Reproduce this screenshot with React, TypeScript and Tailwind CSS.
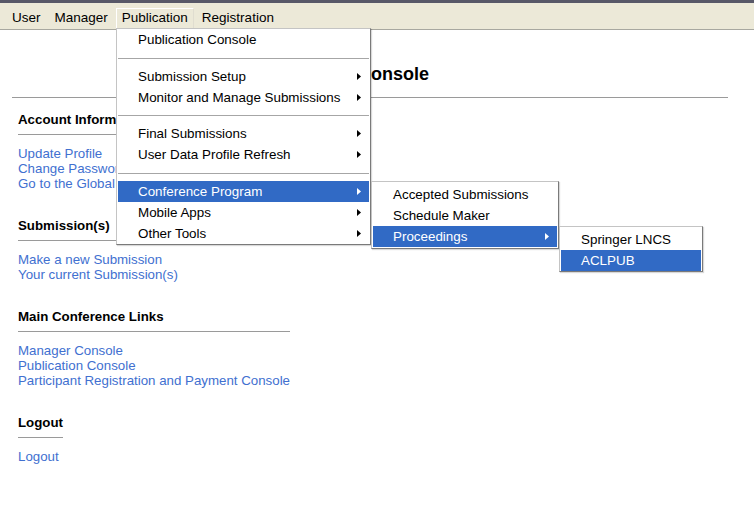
import React from "react";

type Item = { label: string; sub?: boolean; active?: boolean } | "sep";

const mainMenu: Item[] = [
  { label: "Publication Console" },
  "sep",
  { label: "Submission Setup", sub: true },
  { label: "Monitor and Manage Submissions", sub: true },
  "sep",
  { label: "Final Submissions", sub: true },
  { label: "User Data Profile Refresh", sub: true },
  "sep",
  { label: "Conference Program", sub: true, active: true },
  { label: "Mobile Apps", sub: true },
  { label: "Other Tools", sub: true },
];

const programMenu: Item[] = [
  { label: "Accepted Submissions" },
  { label: "Schedule Maker" },
  { label: "Proceedings", sub: true, active: true },
];

const procMenu: Item[] = [
  { label: "Springer LNCS" },
  { label: "ACLPUB", active: true },
];

const sections = [
  {
    title: "Account Information",
    links: ["Update Profile", "Change Password", "Go to the Global Account Page"],
  },
  { title: "Submission(s)", links: ["Make a new Submission", "Your current Submission(s)"] },
  {
    title: "Main Conference Links",
    links: ["Manager Console", "Publication Console", "Participant Registration and Payment Console"],
  },
  { title: "Logout", links: ["Logout"] },
];

function Arrow({ white }: { white?: boolean }) {
  return (
    <svg width="4" height="7" viewBox="0 0 4 7" className="shrink-0">
      <path d="M0 0 L4 3.5 L0 7 Z" fill={white ? "#ffffff" : "#000000"} />
    </svg>
  );
}

function MenuRows({ items, seps = [16, 15, 16] }: { items: Item[]; seps?: number[] }) {
  let s = 0;
  return (
    <>
      {items.map((it, i) => {
        if (it === "sep") {
          const h = seps[s++] ?? 15;
          return (
            <div key={i} className="flex items-center" style={{ height: h }}>
              <div className="h-px w-full bg-[#a6a6a6]" />
            </div>
          );
        }
        return (
          <div
            key={i}
            className={`flex h-[21px] items-center justify-between pl-[20px] pr-[8px] ${
              it.active ? "bg-[#316ac5] text-white" : "text-black"
            }`}
          >
            <span className="pt-[2px]">{it.label}</span>
            {it.sub && <Arrow white={it.active} />}
          </div>
        );
      })}
    </>
  );
}

export default function App() {
  return (
    <div className="relative h-[511px] w-[754px] overflow-hidden bg-white font-['Liberation_Sans',Arial,sans-serif] text-black">
      <div className="h-[3px] bg-[#585868]" />
      <div className="flex h-[27px] items-end gap-[2px] border-b border-[#a8a8a0] bg-[#ece9d8] pl-[6px] text-[13.5px]">
        <div className="px-[6px] pb-[3px] pt-[2px] leading-[16px]">User</div>
        <div className="px-[6px] pb-[3px] pt-[2px] leading-[16px]">Manager</div>
        <div className="border border-b-0 border-white border-r-[#e0ddd0] px-[5px] pb-[3px] pt-[1px] leading-[16px]">
          Publication
        </div>
        <div className="px-[6px] pb-[3px] pt-[2px] leading-[16px]">Registration</div>
      </div>

      <div className="px-[12px]">
        <h1 className="pt-[33px] pr-[31px] text-center text-[18px] font-bold leading-[22px]">
          Author Console
        </h1>
        <div className="mt-[12px] h-px w-[716px] bg-[#9a9a9a]" />

        <div className="flex flex-col items-start pl-[6px] pt-[14px]">
          {sections.map((sec) => (
            <div key={sec.title} className="mb-[27px] flex flex-col">
              <div className="border-b border-[#9a9a9a] pb-[6px] text-[13.3px] font-bold leading-[16px]">
                {sec.title}
              </div>
              <div className="mt-[11px] flex flex-col text-[13.3px] leading-[15px] text-[#4170d0]">
                {sec.links.map((l) => (
                  <a key={l} href="#" className="whitespace-nowrap">
                    {l}
                  </a>
                ))}
              </div>
            </div>
          ))}
        </div>
      </div>

      {/* Publication dropdown */}
      <div className="absolute left-[116px] top-[28px] w-[255px] border border-[#c4c4c4] border-b-[#7a7a7a] border-r-[#7a7a7a] bg-white px-[1px] text-[13.4px] shadow-[1px_1px_1px_rgba(0,0,0,0.15)]">
        <MenuRows items={mainMenu} />
      </div>

      {/* Conference Program submenu */}
      <div className="absolute left-[371px] top-[181px] w-[188px] border border-[#c4c4c4] border-b-[#7a7a7a] border-r-[#7a7a7a] bg-white px-[1px] pb-[1px] pt-[2px] text-[13.4px] shadow-[1px_1px_1px_rgba(0,0,0,0.15)]">
        <MenuRows items={programMenu} />
      </div>

      {/* Proceedings submenu */}
      <div className="absolute left-[559px] top-[226px] w-[144px] border border-[#c4c4c4] border-b-[#7a7a7a] border-r-[#7a7a7a] bg-white px-[1px] pt-[2px] text-[13.4px] shadow-[1px_1px_1px_rgba(0,0,0,0.15)]">
        <MenuRows items={procMenu} />
      </div>
    </div>
  );
}
